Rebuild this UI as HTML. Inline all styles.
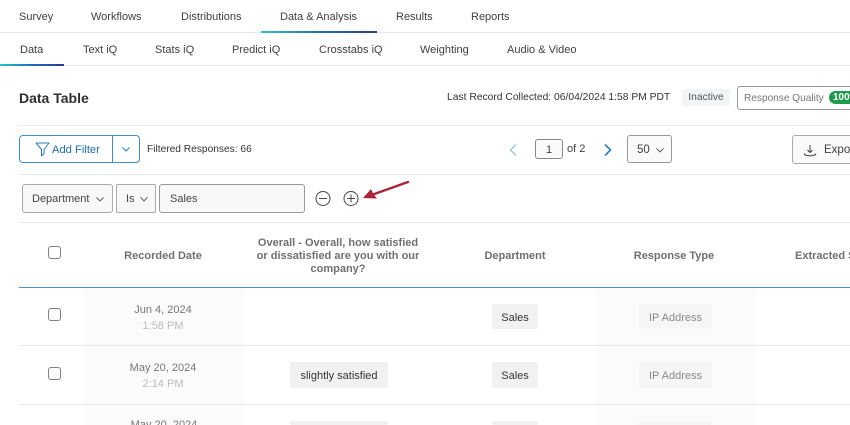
<!DOCTYPE html>
<html><head><meta charset="utf-8">
<style>
html,body{margin:0;padding:0;background:#fff}
#p{position:relative;width:850px;height:425px;overflow:hidden;background:#fff;font-family:"Liberation Sans",sans-serif;font-size:11px;color:#3f3f3f}
#p div{position:absolute;box-sizing:border-box;white-space:nowrap}
.t{line-height:14px;height:14px;transform:translateY(-6px)}
.c{text-align:center;transform:translate(-50%,-6px)}
.l{height:1px;background:#e8e8e8}
.h{font-weight:bold;color:#707070;font-size:11px}
.cb{width:13px;height:13px;border:1px solid #808080;border-radius:3px;background:#fff;left:48px}
.tag{background:#f1f1f1;border-radius:2px;color:#333;text-align:center;height:26px;line-height:28px}
.shade{background:#fbfbfb}
</style></head><body>
<div id="p">
<div class="shade" style="left:84px;top:288px;width:160px;height:137px"></div>
<div class="shade" style="left:597px;top:288px;width:159px;height:137px"></div>

<div class="t" style="left:19px;top:16px">Survey</div>
<div class="t" style="left:91px;top:16px">Workflows</div>
<div class="t" style="left:181px;top:16px">Distributions</div>
<div class="t" style="left:280px;top:16px">Data &amp; Analysis</div>
<div class="t" style="left:396px;top:16px">Results</div>
<div class="t" style="left:471px;top:16px">Reports</div>
<div class="l" style="left:0;top:32px;width:850px"></div>
<div style="left:261px;top:31px;width:116px;height:2px;background:linear-gradient(90deg,#28c3d4,#1f6fb5,#2b3a8f)"></div>

<div class="t" style="left:20px;top:49px">Data</div>
<div class="t" style="left:83px;top:49px">Text iQ</div>
<div class="t" style="left:155px;top:49px">Stats iQ</div>
<div class="t" style="left:232px;top:49px">Predict iQ</div>
<div class="t" style="left:319px;top:49px">Crosstabs iQ</div>
<div class="t" style="left:420px;top:49px">Weighting</div>
<div class="t" style="left:507px;top:49px">Audio &amp; Video</div>
<div class="l" style="left:0;top:65px;width:850px"></div>
<div style="left:0;top:64px;width:64px;height:2px;background:linear-gradient(90deg,#28c3d4,#1f6fb5,#2b3a8f)"></div>

<div class="t" style="left:19px;top:97px;font-size:14px;font-weight:bold;color:#2f2f2f">Data Table</div>
<div class="t" style="left:447px;top:97px;font-size:10.3px;color:#333">Last Record Collected: 06/04/2024 1:58 PM PDT</div>
<div style="left:682px;top:89px;width:48px;height:17px;background:#f2f4f5;border-radius:2px;line-height:18px;text-align:center;font-size:10.3px;color:#555">Inactive</div>
<div style="left:737px;top:86px;width:130px;height:24px;border:1px solid #999;border-radius:3px;line-height:23px;padding-left:6px;font-size:10.1px;color:#777">Response Quality</div>
<div style="left:829px;top:91px;width:40px;height:13px;background:#1f9a4d;border-radius:7px;color:#fff;font-size:10px;font-weight:bold;line-height:14px;padding-left:4px">100%</div>
<div class="l" style="left:19px;top:125px;width:831px"></div>

<div style="left:19px;top:135px;width:121px;height:28px;border:1px solid #3f8fcc;border-radius:4px"></div>
<div style="left:112px;top:135px;width:1px;height:28px;background:#3f8fcc"></div>
<svg style="position:absolute;left:35px;top:142px" width="15" height="15" viewBox="0 0 15 15" fill="none" stroke="#2a7fc0" stroke-width="1"><path d="M1 1H14L9 7.500V11.500L6.500 14V7.500Z" stroke-linejoin="round"/></svg>
<div class="t" style="left:52px;top:149px;font-size:11.2px;color:#1a6eb5">Add Filter</div>
<svg style="position:absolute;left:122px;top:147px" width="8" height="5" viewBox="0 0 8 5" fill="none" stroke="#2a7fc0" stroke-width="1"><path d="M.5 .5L4 4L7.500 .5"/></svg>
<div class="t" style="left:147px;top:149px;font-size:10.2px;color:#333">Filtered Responses: 66</div>

<svg style="position:absolute;left:508px;top:143px" width="10" height="14" viewBox="0 0 10 14" fill="none" stroke="#a8c8e6" stroke-width="1.500"><path d="M8 1.500L2.500 7L8 12.500"/></svg>
<div style="left:535px;top:139px;width:28px;height:20px;border:1px solid #888;border-radius:3px;background:#fafafa;text-align:center;line-height:20px;font-size:11px">1</div>
<div class="t" style="left:567px;top:148px;font-size:11px">of 2</div>
<svg style="position:absolute;left:603px;top:143px" width="10" height="14" viewBox="0 0 10 14" fill="none" stroke="#2a7fc0" stroke-width="1.600"><path d="M2 1.500L7.500 7L2 12.500"/></svg>
<div style="left:627px;top:135px;width:45px;height:28px;border:1px solid #999;border-radius:3px;background:#fafafa;line-height:28px;padding-left:9px;font-size:11.5px">50</div>
<svg style="position:absolute;left:656px;top:148px" width="8" height="5" viewBox="0 0 8 5" fill="none" stroke="#555" stroke-width="0.900"><path d="M.5 .5L4 4L7.500 .5"/></svg>
<div style="left:792px;top:135px;width:80px;height:29px;border:1px solid #aaa;border-radius:3px;background:#fafafa"></div>
<svg style="position:absolute;left:802px;top:143px" width="16" height="15" viewBox="0 0 16 15" fill="none" stroke="#444" stroke-width="1"><path d="M8 2V9.500M5.500 7L8 9.500L10.500 7M2 10.500C2.500 13.500 13.500 13.500 14 10.500"/></svg>
<div class="t" style="left:824px;top:149px;font-size:11.5px">Export</div>
<div class="l" style="left:19px;top:174px;width:831px"></div>

<div style="left:22px;top:184px;width:91px;height:29px;border:1px solid #aaa;border-radius:3px;background:#f8f8f8;line-height:28px;padding-left:9px;color:#444">Department</div>
<svg style="position:absolute;left:96px;top:197px" width="8" height="5" viewBox="0 0 8 5" fill="none" stroke="#555" stroke-width="0.900"><path d="M.5 .5L4 4L7.500 .5"/></svg>
<div style="left:116px;top:184px;width:40px;height:29px;border:1px solid #aaa;border-radius:2px;background:#f8f8f8;line-height:28px;padding-left:9px;color:#444">Is</div>
<svg style="position:absolute;left:140px;top:197px" width="8" height="5" viewBox="0 0 8 5" fill="none" stroke="#555" stroke-width="0.900"><path d="M.5 .5L4 4L7.500 .5"/></svg>
<div style="left:159px;top:184px;width:146px;height:29px;border:1px solid #999;border-radius:3px;background:#f8f8f8;line-height:28px;padding-left:10px;color:#444">Sales</div>
<svg style="position:absolute;left:314px;top:190px" width="18" height="18" viewBox="0 0 18 18" fill="none" stroke="#444" stroke-width="1"><circle cx="9" cy="8.500" r="7"/><path d="M5 8.500H13"/></svg>
<svg style="position:absolute;left:342px;top:190px" width="18" height="18" viewBox="0 0 18 18" fill="none" stroke="#444" stroke-width="1"><circle cx="9" cy="8.500" r="7"/><path d="M5 8.500H13M9 4.500V12.500"/></svg>
<svg style="position:absolute;left:360px;top:178px" width="52" height="26" viewBox="0 0 52 26"><path d="M48 4L13 16.500" stroke="#ab2335" stroke-width="2.400" stroke-linecap="round" fill="none"/><path d="M3 20L11 11L13 15.500L17 20.500Z" fill="#ab2335"/></svg>
<div class="l" style="left:19px;top:222px;width:831px"></div>

<div class="cb" style="top:246px"></div>
<div class="t h c" style="left:163px;top:255px">Recorded Date</div>
<div class="t h c" style="left:338px;top:242px">Overall - Overall, how satisfied</div>
<div class="t h c" style="left:338px;top:255px">or dissatisfied are you with our</div>
<div class="t h c" style="left:338px;top:268px">company?</div>
<div class="t h c" style="left:515px;top:255px">Department</div>
<div class="t h c" style="left:674px;top:255px">Response Type</div>
<div class="t h" style="left:795px;top:255px">Extracted Sentiment</div>
<div style="left:19px;top:287px;width:831px;height:1px;background:#4496c4"></div>

<div class="cb" style="top:308px"></div>
<div class="t c" style="left:163px;top:309px;color:#777">Jun 4, 2024</div>
<div class="t c" style="left:163px;top:325px;color:#bbb">1:58 PM</div>
<div class="tag" style="left:492px;top:304px;width:46px;height:25px">Sales</div>
<div class="tag" style="left:639px;top:304px;width:73px;height:25px;color:#888;background:#f6f6f6">IP Address</div>
<div class="l" style="left:19px;top:345px;width:831px"></div>

<div class="cb" style="top:367px"></div>
<div class="t c" style="left:163px;top:367px;color:#777">May 20, 2024</div>
<div class="t c" style="left:163px;top:383px;color:#bbb">2:14 PM</div>
<div class="tag" style="left:290px;top:362px;width:98px">slightly satisfied</div>
<div class="tag" style="left:492px;top:362px;width:46px">Sales</div>
<div class="tag" style="left:639px;top:362px;width:73px;color:#888;background:#f6f6f6">IP Address</div>
<div class="l" style="left:19px;top:404px;width:831px"></div>

<div style="left:84px;top:418px;width:160px;height:7px;overflow:hidden;line-height:14px;text-align:center;color:#777">May 20, 2024</div>
<div class="tag" style="left:290px;top:421px;width:98px;height:4px"></div>
<div class="tag" style="left:492px;top:421px;width:46px;height:4px"></div>
<div class="tag" style="left:639px;top:421px;width:73px;height:4px;background:#f6f6f6"></div>
</div>
</body></html>
